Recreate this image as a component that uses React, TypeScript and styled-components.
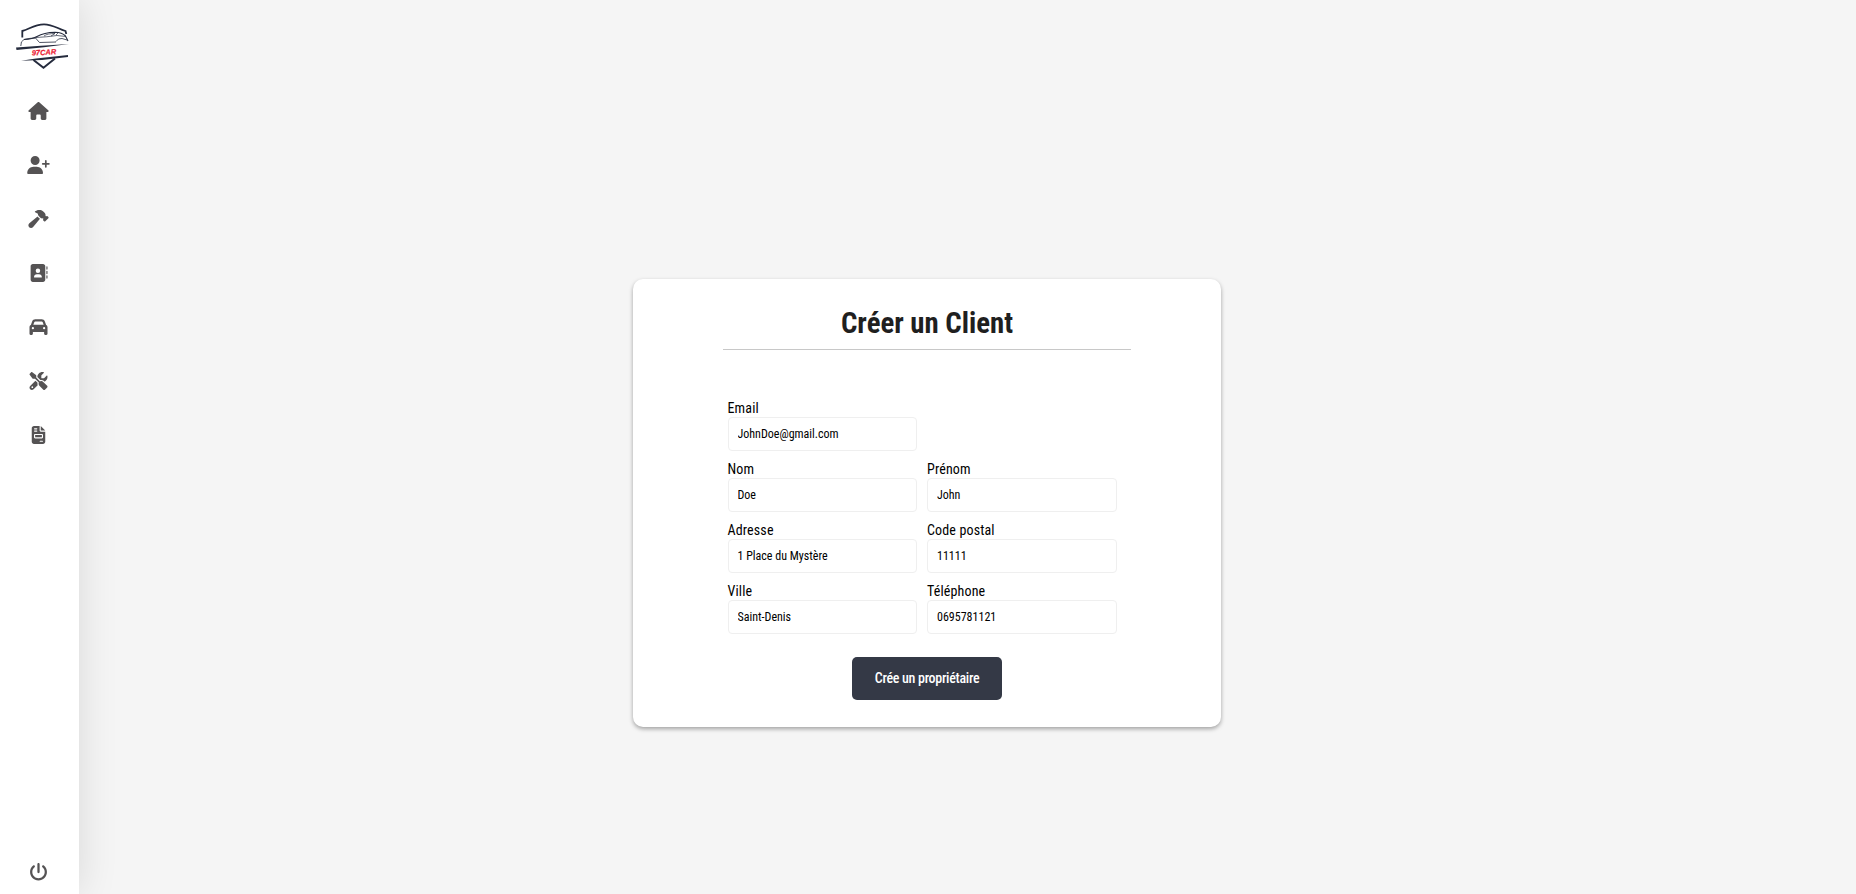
import React from "react";
import styled, { createGlobalStyle, css } from "styled-components";
import {
  FaHouse,
  FaUserPlus,
  FaHammer,
  FaAddressBook,
  FaCar,
  FaScrewdriverWrench,
  FaFileInvoice,
  FaPowerOff,
} from "react-icons/fa6";

const GlobalStyle = createGlobalStyle`
  *, *::before, *::after { box-sizing: border-box; }
  body {
    margin: 0;
    background: #f5f5f5;
    color: #000;
    font-family: "Roboto Condensed", Roboto, sans-serif;
    font-stretch: 75%;
  }
  input, button { font-family: inherit; font-stretch: inherit; }
`;

const Page = styled.div`
  display: flex;
  height: 100vh;
  overflow: hidden;
`;

const Sidebar = styled.nav`
  display: flex;
  flex-direction: column;
  flex: 0 0 79px;
  padding: 21px 2px 0 0;
  align-items: center;
  background: #fff;
  box-shadow: 0 0 40px rgba(0, 0, 0, 0.12);
`;

const Logo = styled.svg`
  width: 56px;
  height: 50px;
  margin: 0 0 13px 9px;
  flex: none;
`;

const NavItem = styled.a<{ $iconWidth: number; $last?: boolean }>`
  display: flex;
  flex: none;
  align-items: center;
  justify-content: center;
  width: 55px;
  height: 54px;
  color: #555354;
  ${(p) =>
    p.$last &&
    css`
      height: 44px;
      margin-top: auto;
    `}

  svg {
    flex: none;
    width: ${(p) => p.$iconWidth}px;
    height: 18px;
  }
`;

const Main = styled.main`
  display: flex;
  flex: 1;
  justify-content: center;
  align-items: flex-start;
  padding: 279px 81px 0 0;
`;

const Card = styled.section`
  display: flex;
  flex-direction: column;
  align-items: center;
  width: 588px;
  height: 448px;
  padding-top: 20px;
  border-radius: 10px;
  background: #fff;
  box-shadow: 0 2px 4px rgba(0, 0, 0, 0.34);
`;

const Title = styled.h1`
  width: 408px;
  height: 51px;
  margin: 0 0 47px;
  border-bottom: 1px solid #c8c8c8;
  color: #1f1f1f;
  font-size: 28.8px;
  font-weight: 700;
  line-height: 48px;
  text-align: center;
`;

const Form = styled.form`
  display: flex;
  flex-direction: column;
  align-items: center;
`;

const Fields = styled.div`
  display: grid;
  grid-template-columns: 189.5px 189.5px;
  column-gap: 10px;
  row-gap: 7px;
  padding-right: 10px;
`;

const Field = styled.label<{ $alone?: boolean }>`
  display: flex;
  flex-direction: column;
  grid-column: ${(p) => (p.$alone ? "1 / 2" : "auto")};
`;

const Caption = styled.span`
  height: 20px;
  font-size: 14px;
  line-height: 22px;
  letter-spacing: 0.15px;
`;

const Input = styled.input`
  width: 100%;
  height: 34px;
  padding: 0 9px;
  border: 1px solid #efefef;
  border-radius: 4px;
  background: #fff;
  color: #000;
  font-size: 12px;
  outline: none;
`;

const RowBreak = styled.span``;

const Submit = styled.button`
  width: 150px;
  height: 43px;
  margin-top: 23px;
  padding: 0 0 1px;
  border: 0;
  border-radius: 5px;
  background: #343946;
  color: #fff;
  font-size: 14px;
  font-weight: 500;
  letter-spacing: -0.3px;
`;

const navigation = [
  { name: "Accueil", Icon: FaHouse, width: 21 },
  { name: "Nouveau client", Icon: FaUserPlus, width: 23 },
  { name: "Réparations", Icon: FaHammer, width: 21 },
  { name: "Clients", Icon: FaAddressBook, width: 19 },
  { name: "Véhicules", Icon: FaCar, width: 19 },
  { name: "Interventions", Icon: FaScrewdriverWrench, width: 19 },
  { name: "Factures", Icon: FaFileInvoice, width: 15 },
];

const fields = [
  { label: "Email", value: "JohnDoe@gmail.com", alone: true },
  { label: "Nom", value: "Doe" },
  { label: "Prénom", value: "John" },
  { label: "Adresse", value: "1 Place du Mystère" },
  { label: "Code postal", value: "11111" },
  { label: "Ville", value: "Saint-Denis" },
  { label: "Téléphone", value: "0695781121" },
];

function Brand() {
  return (
    <Logo viewBox="15 21 56 50" fill="none" stroke="#252b3d">
      <path d="M22.300 37.500V31C29 29.500 34 24.300 44 24.300C53 24.300 58 29 65.500 31L66.300 34" strokeWidth="1.8" />
      <path d="M20.800 46Q20.500 41 24 39.500Q30 38 35.500 38L39.500 42.500L56 42" strokeWidth=".8" />
      <path d="M24 39.500Q33 39 37 36.500Q44 32.500 55 32.300Q62 32.500 65.500 36L68 41" strokeWidth="1.1" />
      <path d="M36 37.500Q47 37 57 35.500L66 36.500M44 36Q47 33.500 55 33.500L51 36M56 35L58 33" strokeWidth=".7" />
      <path d="M56 41.500Q58 38 62 38.500L67 40" strokeWidth=".8" />
      <path d="M16 47.500L41 45.700L69 44L44 47.200L16.500 50Z" fill="#252b3d" stroke="none" />
      <path d="M21 60.700L36 58.500L68 55L68 57L42 60Z" fill="#252b3d" stroke="none" />
      <path d="M33.500 60L43.500 67.800L55 58.500" strokeWidth="2" />
      <text
        x="31.800"
        y="55"
        textLength="24.300"
        lengthAdjust="spacingAndGlyphs"
        transform="rotate(-3 43 52)"
        fill="#ec1b35"
        stroke="#ec1b35"
        strokeWidth=".2"
        fontFamily="Liberation Sans, sans-serif"
        fontSize="7.500"
        fontWeight="700"
        fontStyle="italic"
      >
        97CAR
      </text>
    </Logo>
  );
}

export default function App() {
  return (
    <>
      <GlobalStyle />
      <Page>
        <Sidebar>
          <Brand />
          {navigation.map(({ name, Icon, width }) => (
            <NavItem key={name} $iconWidth={width}>
              <Icon />
            </NavItem>
          ))}
          <NavItem $iconWidth={19} $last>
            <FaPowerOff />
          </NavItem>
        </Sidebar>
        <Main>
          <Card>
            <Title>Créer un Client</Title>
            <Form>
              <Fields>
                {fields.map(({ label, value, alone }) => (
                  <React.Fragment key={label}>
                    <Field $alone={alone}>
                      <Caption>{label}</Caption>
                      <Input defaultValue={value} />
                    </Field>
                    {alone && <RowBreak />}
                  </React.Fragment>
                ))}
              </Fields>
              <Submit type="button">Crée un propriétaire</Submit>
            </Form>
          </Card>
        </Main>
      </Page>
    </>
  );
}
